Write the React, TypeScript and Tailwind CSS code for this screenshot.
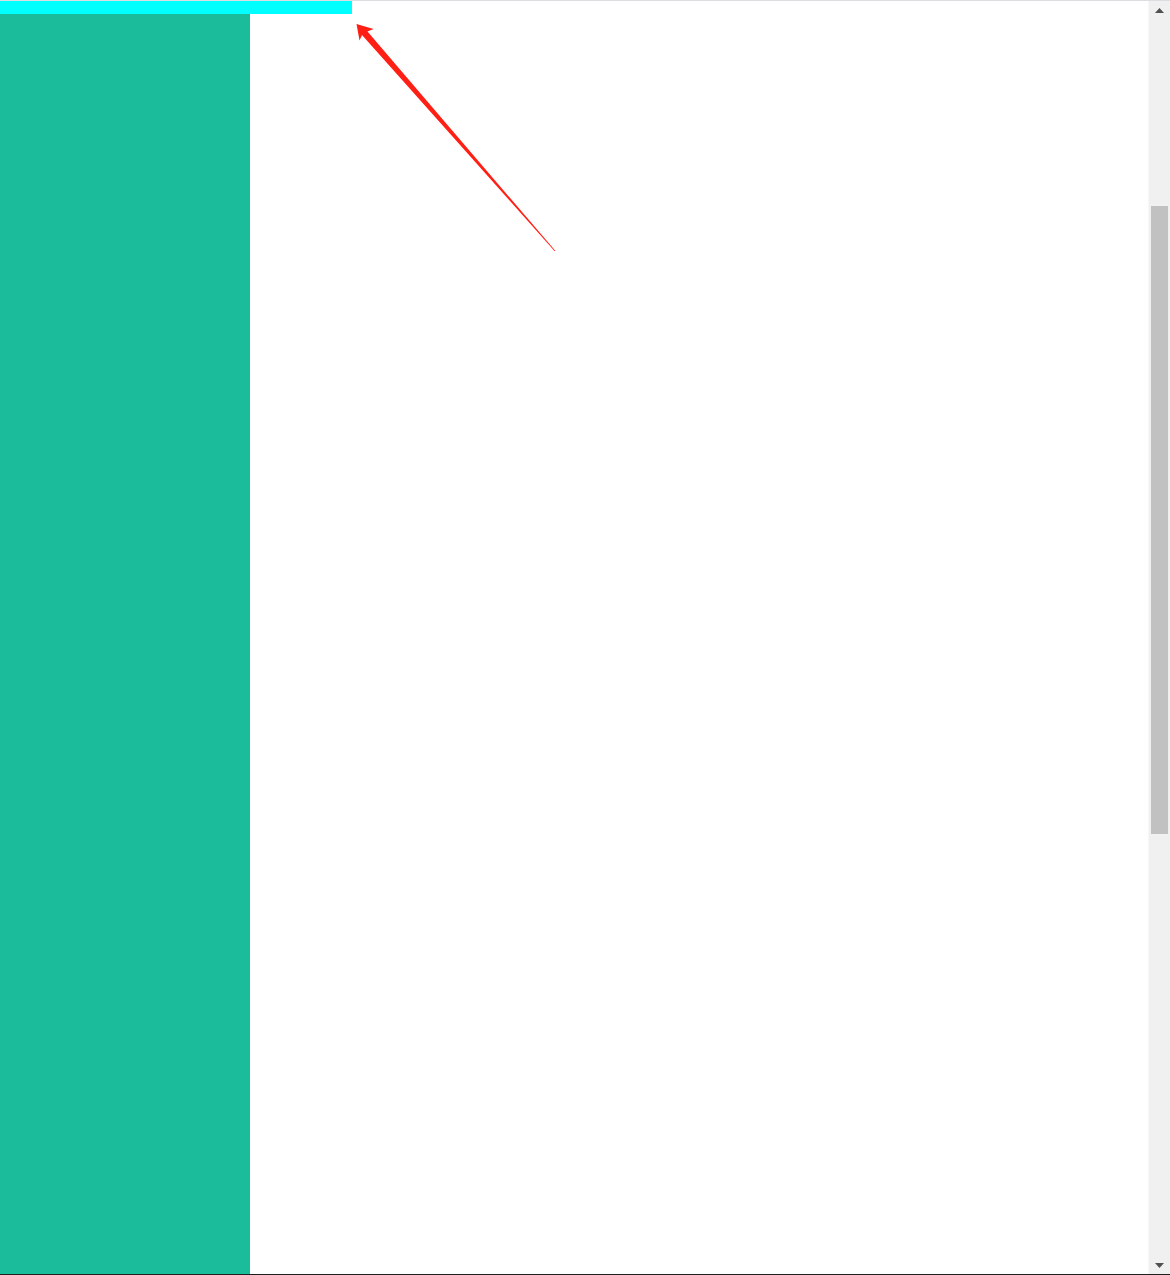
export default function App() {
  return (
    <div className="flex h-[1275px] w-[1170px] flex-col border-t border-b border-t-[#dcdde0] border-b-[#1f1f1f] bg-white">
      <div className="flex min-h-0 flex-1">
        <div className="relative flex flex-1 flex-col">
          <div className="h-[13px] w-[352px] bg-[#00ffff]" />
          <div className="flex flex-1">
            <aside className="w-[250px] bg-[#1abc9c]" />
            <main className="flex-1 bg-white" />
          </div>
          <svg
            className="pointer-events-none absolute left-0 top-0"
            width="600"
            height="260"
            viewBox="0 0 600 260"
          >
            <path
              d="M356.5,23 L373.5,28 L367.5,30.5 L555.5,250 L554.5,250 L362,34 L359.5,39.5 Z"
              fill="#ff1f14"
            />
          </svg>
        </div>
        <div className="flex w-[22px] flex-col border-l border-[#f7f7f7] bg-[#f0f0f0]">
          <div className="flex h-[18px] items-center justify-center">
            <svg width="9" height="5" viewBox="0 0 9 5">
              <path d="M4.5,0 L9,5 L0,5 Z" fill="#505050" />
            </svg>
          </div>
          <div className="h-[187px]" />
          <div className="mx-[2px] h-[628px] bg-[#c1c1c1]" />
          <div className="flex-1" />
          <div className="flex h-[18px] items-center justify-center">
            <svg width="9" height="5" viewBox="0 0 9 5">
              <path d="M0,0 L9,0 L4.5,5 Z" fill="#505050" />
            </svg>
          </div>
        </div>
      </div>
    </div>
  );
}
